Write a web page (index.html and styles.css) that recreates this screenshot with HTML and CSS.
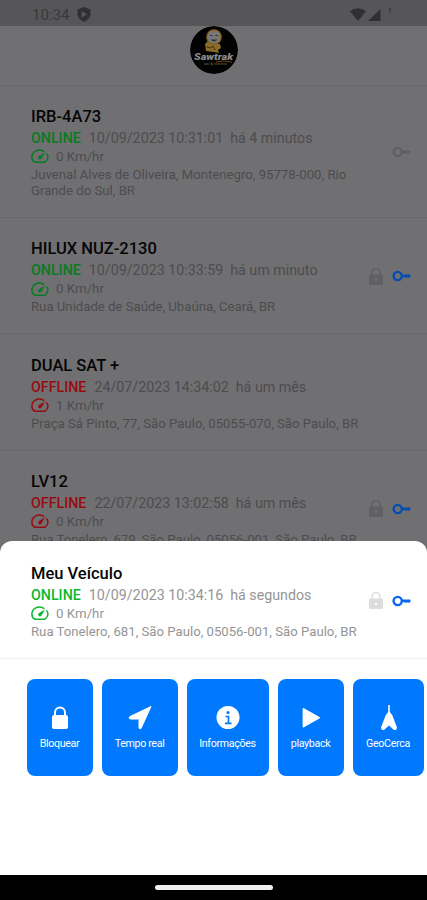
FILE: index.html
```html
<!DOCTYPE html>
<html lang="pt-BR">
<head>
<meta charset="utf-8">
<title>Veículos</title>
<link rel="stylesheet" href="styles.css">
</head>
<body>
<svg class="defs" width="0" height="0">
  <symbol id="gauge" viewBox="0 0 18 15"><path d="M4 13.200H14C17.800 10.400 17.300 6.800 15.800 4.900M12.800 2.300C6.200-1 .9 3.400.9 8.200.9 10.500 2 12.300 4 13.200" fill="none" stroke="currentColor" stroke-width="1.500" stroke-linecap="round" stroke-linejoin="round"/><path d="M14 3.600 10.500 9.600Q9 11.200 7.500 9.800 6.500 8.200 8 7Z" fill="currentColor"/></symbol>
  <symbol id="lock" viewBox="0 0 14 19"><path d="M3.200 8V5.200a3.800 3.800 0 0 1 7.600 0V8" fill="none" stroke="currentColor" stroke-width="1.500"/><path fill-rule="evenodd" d="M1.500 7.500h11q1.500 0 1.500 1.500v7.500q0 1.500-1.500 1.500h-11Q0 18 0 16.500V9Q0 7.500 1.500 7.500ZM7 11.500a1.300 1.300 0 1 0 0 2.600A1.300 1.300 0 0 0 7 11.500Z" fill="currentColor"/></symbol>
  <symbol id="key" viewBox="0 0 19 12"><circle cx="5.700" cy="6" r="4.100" fill="none" stroke="currentColor" stroke-width="2.400"/><path d="M10 4.600h8l.8 1.400-1.600 2-1.700-.7-1.300.8-1.400-.8H10Z" fill="currentColor"/></symbol>
</svg>
<div class="screen">
  <header class="status-bar">
    <span class="clock">10:34</span>
    <svg class="shield" width="14" height="15" viewBox="0 0 14 15"><path fill-rule="evenodd" d="M7 0l6.500 2.500v5Q12.500 12.500 7 15 1.500 12.500.5 7.500v-5ZM4.500 4v6.500L10 7.300Z" fill="currentColor"/></svg>
    <svg class="signals" width="42" height="14" viewBox="0 0 42 14"><path d="M0 3.200Q8-2.600 16 3.200L8 13ZM18 13 30.500 1v12Z" fill="currentColor"/><path d="M39.200 0h1.300v4.500h-1.300z" fill="currentColor"/></svg>
  </header>
  <div class="app-bar">
    <svg class="logo" width="48" height="48" viewBox="0 0 48 48">
      <circle cx="24" cy="24" r="24" fill="#020202"/>
      <path d="M15 18l3-3 4 2 8 1 1 4-3 2 1 3-5-1-8-1Z" fill="#886c27"/>
      <path d="M17 21l4 1 2-2 2 4" fill="none" stroke="#49280b"/>
      <circle cx="24" cy="11" r="7.200" fill="#777" stroke="#8a601b" stroke-width="1.300"/>
      <path d="M20 9.500h2.500M25.500 9.500H28" stroke="#333"/><path d="M20.500 13.500h7q-3.500 4-7 0" fill="#353535"/>
      <text class="logo-name" x="4" y="34" textLength="39" lengthAdjust="spacingAndGlyphs">Sawtrak</text>
      <path d="M26 36q6-2 16 0" fill="none" stroke="#704619"/>
      <text class="logo-sub" x="14" y="39" textLength="23">sat &amp; rastreio</text>
    </svg>
  </div>
  <main class="list">
    <section class="vehicle">
      <div class="info">
        <h2>IRB-4A73</h2>
        <p class="state"><b class="online">ONLINE</b><span>10/09/2023 10:31:01</span><span>há 4 minutos</span></p>
        <p class="speed"><svg class="gauge online"><use href="#gauge"/></svg>0 Km/hr</p>
        <p class="address">Juvenal Alves de Oliveira, Montenegro, 95778-000, Rio<br>Grande do Sul, BR</p>
      </div>
      <div class="flags"><svg class="key off"><use href="#key"/></svg></div>
    </section>
    <section class="vehicle">
      <div class="info">
        <h2>HILUX NUZ-2130</h2>
        <p class="state"><b class="online">ONLINE</b><span>10/09/2023 10:33:59</span><span>há um minuto</span></p>
        <p class="speed"><svg class="gauge online"><use href="#gauge"/></svg>0 Km/hr</p>
        <p class="address">Rua Unidade de Saúde, Ubaúna, Ceará, BR</p>
      </div>
      <div class="flags"><svg class="lock"><use href="#lock"/></svg><svg class="key"><use href="#key"/></svg></div>
    </section>
    <section class="vehicle">
      <div class="info">
        <h2>DUAL SAT +</h2>
        <p class="state"><b class="offline">OFFLINE</b><span>24/07/2023 14:34:02</span><span>há um mês</span></p>
        <p class="speed"><svg class="gauge offline"><use href="#gauge"/></svg>1 Km/hr</p>
        <p class="address">Praça Sá Pinto, 77, São Paulo, 05055-070, São Paulo, BR</p>
      </div>
    </section>
    <section class="vehicle">
      <div class="info">
        <h2>LV12</h2>
        <p class="state"><b class="offline">OFFLINE</b><span>22/07/2023 13:02:58</span><span>há um mês</span></p>
        <p class="speed"><svg class="gauge offline"><use href="#gauge"/></svg>0 Km/hr</p>
        <p class="address">Rua Tonelero, 679, São Paulo, 05056-001, São Paulo, BR</p>
      </div>
      <div class="flags"><svg class="lock"><use href="#lock"/></svg><svg class="key"><use href="#key"/></svg></div>
    </section>
  </main>
  <div class="sheet">
    <section class="vehicle">
      <div class="info">
        <h2>Meu Veículo</h2>
        <p class="state"><b class="online">ONLINE</b><span>10/09/2023 10:34:16</span><span>há segundos</span></p>
        <p class="speed"><svg class="gauge online"><use href="#gauge"/></svg>0 Km/hr</p>
        <p class="address">Rua Tonelero, 681, São Paulo, 05056-001, São Paulo, BR</p>
      </div>
      <div class="flags"><svg class="lock"><use href="#lock"/></svg><svg class="key"><use href="#key"/></svg></div>
    </section>
    <nav class="actions">
      <button><svg viewBox="0 0 26 26"><path d="M8 11V7.500a5 5 0 0 1 10 0V11" fill="none" stroke="#fff" stroke-width="2"/><rect x="5" y="10" width="16" height="14" rx="2" fill="#fff"/></svg><span>Bloquear</span></button>
      <button><svg viewBox="0 0 26 26"><path d="M24 1.500 14 23.500q-2 1-2-1V14H3q-2-1 0-2.500Z" fill="#fff" stroke="#fff" stroke-linejoin="round"/></svg><span>Tempo real</span></button>
      <button><svg viewBox="0 0 26 26"><circle cx="13" cy="12.500" r="11.500" fill="#fff"/><circle cx="13" cy="7.500" r="1.500" fill="#0079ff"/><path d="M10.500 11.500h3v6.500M10 18.300h6.500" fill="none" stroke="#0079ff" stroke-width="1.700"/></svg><span>Informações</span></button>
      <button><svg viewBox="0 0 26 26"><path d="M5.500 4v17.500L21 12.800Z" fill="#fff" stroke="#fff" stroke-width="1.800" stroke-linejoin="round"/></svg><span>playback</span></button>
      <button><svg viewBox="0 0 26 26"><path d="M12.200 0h1.600v7l2.400 3 4.800 12.500q0 3-3 2.500L13 20.500 8 25q-3 .5-3-2.500L9.800 10l2.400-3Z" fill="#fff"/></svg><span>GeoCerca</span></button>
    </nav>
  </div>
  <footer class="nav-bar"><i></i></footer>
</div>
</body>
</html>
```
FILE: styles.css
```css
* { box-sizing: border-box; }
body { margin: 0; font-family: Roboto, "Liberation Sans", sans-serif; }
h2, p { margin: 0; font-weight: 400; }
.defs { position: absolute; }
.screen {
  position: relative;
  width: 427px;
  height: 900px;
  overflow: hidden;
  background: #707072;
}
.status-bar {
  height: 26px;
  background: #565658;
  color: #303032;
  display: flex;
  align-items: center;
  padding: 3px 35px 0 32px;
}
.clock { font-size: 15px; line-height: 20px; color: #3a3a3c; }
.shield { margin-left: 8px; }
.signals { margin-left: auto; }
.app-bar {
  height: 60px;
  border-bottom: 1px solid #69696c;
  display: flex;
  justify-content: center;
}
.logo { display: block; margin-left: 1px; border-radius: 50%; }
.logo-name { font: italic 900 9px Roboto, sans-serif; fill: #8b8b8b; }
.logo-sub { font: italic 4px Roboto, sans-serif; fill: #77604a; }
.vehicle {
  display: flex;
  justify-content: space-between;
  align-items: center;
  height: 116.4px;
  padding: 1px 16px 0 31px;
  border-bottom: 1px solid #69696c;
  color: #4c4c4e;
  white-space: nowrap;
}
.list .vehicle:first-child { height: 132px; padding-top: 0; }
.info { width: 330px; }
h2 { font-size: 16.5px; font-weight: 500; line-height: 23px; color: #050506; }
.state { display: flex; font-size: 14.25px; line-height: 20px; }
.state b { font-weight: 500; margin-right: 8px; }
.state span + span { margin-left: 7px; }
.speed { display: flex; align-items: center; font-size: 13.3px; line-height: 18px; height: 18px; }
.gauge { width: 18px; height: 15px; margin-right: 7px; }
.address { font-size: 13.18px; line-height: 16px; padding-top: 1px; }
.online { color: #087b22; }
.offline { color: #980c10; }
.flags { display: flex; align-items: center; gap: 9px; }
.lock { width: 14px; height: 19px; color: #606062; }
.key { width: 19px; height: 12px; color: #074db0; }
.key.off { color: #5f5f61; }
.sheet {
  position: absolute;
  left: 0;
  right: 0;
  top: 541px;
  height: 334px;
  background: #fff;
  border-radius: 12px 12px 0 0;
}
.sheet .vehicle { border-color: #f1f1f1; color: #959595; height: 118px; padding-top: 2px; }
.sheet .online { color: #0bb82d; }
.sheet .lock { color: #dcdcdc; }
.sheet .key { color: #0867f5; }
.actions {
  display: grid;
  grid-template-columns: 66px 76px 82px 66px 71px;
  column-gap: 9px;
  padding: 20px 0 0 27px;
}
.actions button {
  height: 97px;
  padding: 0;
  border: 0;
  border-radius: 8px;
  background: #0079ff;
  color: #fff;
  font: 10.7px/14px Roboto, sans-serif;
  display: flex;
  flex-direction: column;
  align-items: center;
  justify-content: center;
  gap: 6px;
  letter-spacing: -.35px;
}
.actions span { margin-right: 1px; }
.actions svg { width: 26px; height: 26px; }
.nav-bar {
  position: absolute;
  left: 0;
  right: 0;
  bottom: 0;
  height: 25px;
  background: #000;
  display: flex;
  justify-content: center;
  align-items: center;
}
.nav-bar i { width: 118px; height: 5px; border-radius: 3px; background: #f1eff0; }
```
